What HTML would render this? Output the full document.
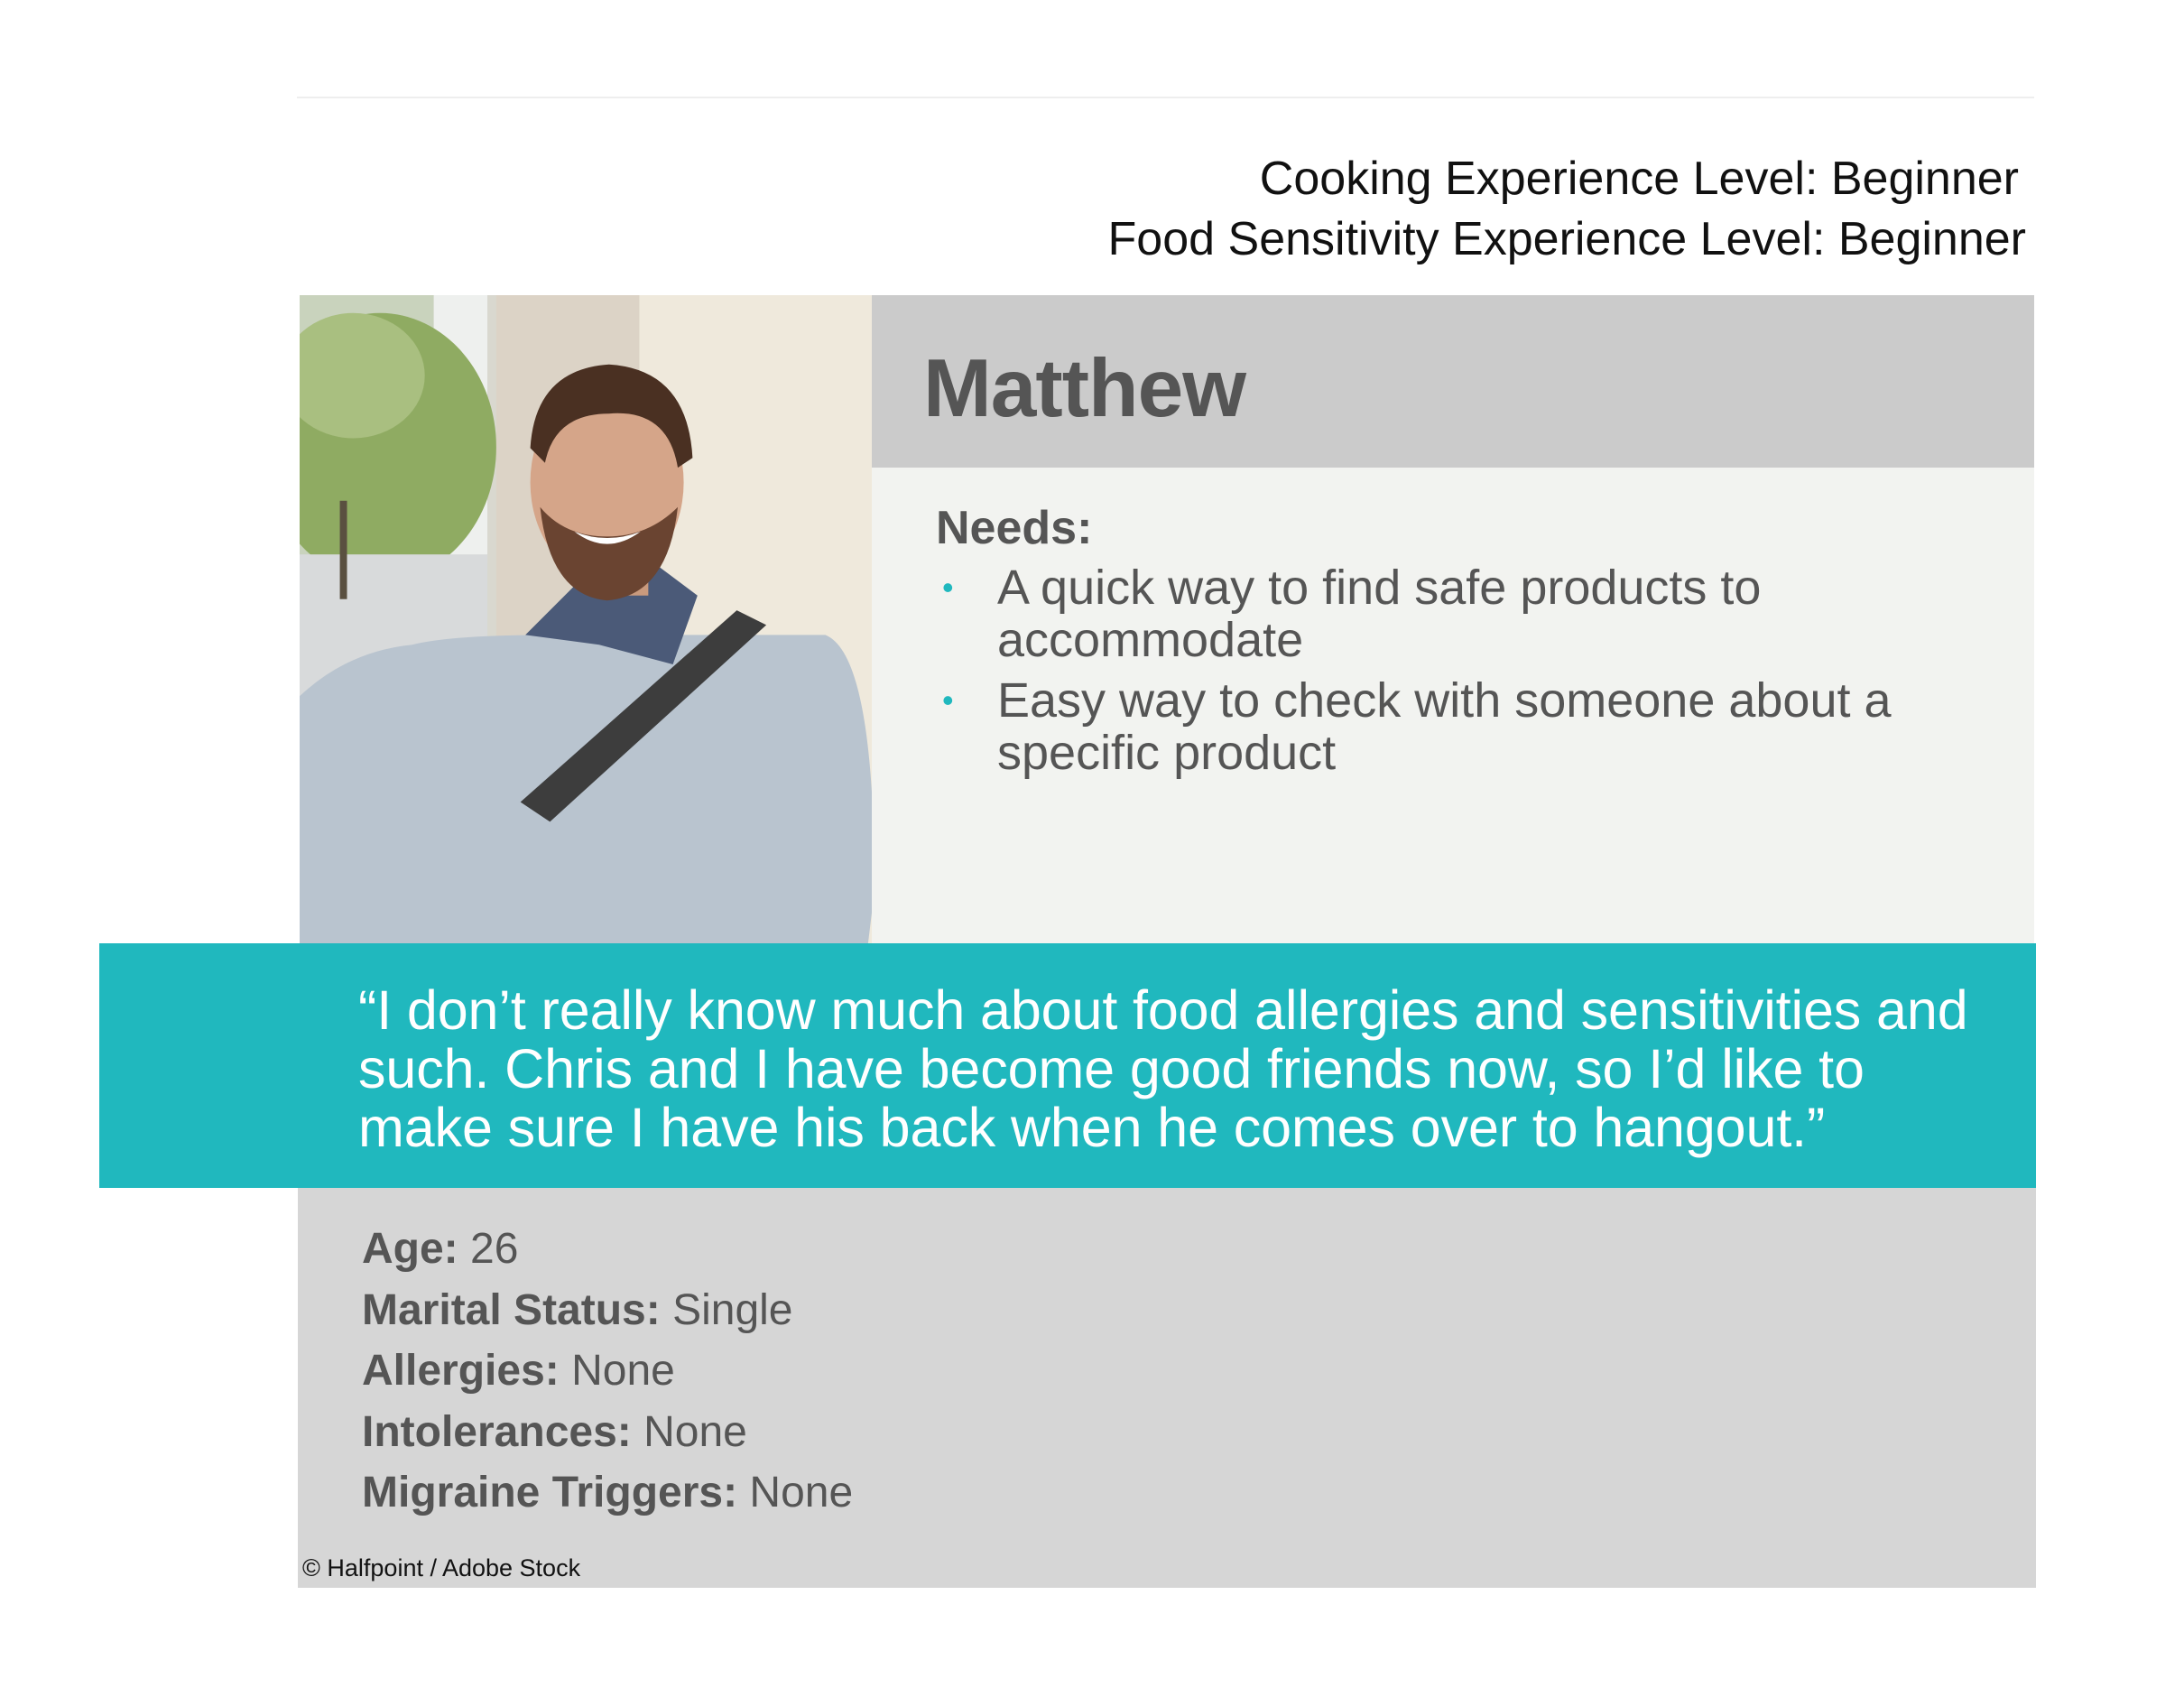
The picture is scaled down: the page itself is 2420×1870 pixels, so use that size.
<!DOCTYPE html>
<html><head><meta charset="utf-8"><style>
body{margin:0;width:2420px;height:1870px;background:#fff;position:relative;overflow:hidden;font-family:"Liberation Sans",sans-serif;}
.a{position:absolute;white-space:nowrap;}
</style></head><body>
<div class="a" style="left:329px;top:107px;width:1925px;height:2px;background:#eeeeee"></div>
<div class="a" style="right:183px;top:165px;font-size:52px;color:#111;text-align:right;line-height:67px">Cooking Experience Level: Beginner<br><span style="margin-right:-8px">Food Sensitivity Experience Level: Beginner</span></div>

<svg class="a" style="left:332px;top:327px" width="634" height="718" viewBox="0 0 640 725" preserveAspectRatio="none">
<rect width="640" height="725" fill="#d9d8cf"/>
<rect x="0" y="0" width="210" height="725" fill="#c9d3bd"/>
<rect x="150" y="0" width="60" height="300" fill="#eef0ee"/>
<ellipse cx="90" cy="170" rx="130" ry="150" fill="#8fab62"/>
<ellipse cx="60" cy="90" rx="80" ry="70" fill="#a9bf80"/>
<rect x="0" y="290" width="210" height="200" fill="#d8dadb"/>
<rect x="45" y="230" width="8" height="110" fill="#5a5040"/>
<rect x="0" y="480" width="210" height="245" fill="#e2e0dc"/>
<rect x="220" y="0" width="170" height="725" fill="#dcd3c6"/>
<rect x="380" y="0" width="260" height="725" fill="#efe9dc"/>
<g transform="translate(60,50) scale(1.1)">
<path d="M-100 420 Q-40 320 60 310 Q100 300 200 300 L480 300 Q530 320 530 560 L510 725 L-100 725 Z" fill="#b9c4cf"/>
<path d="M175 300 L225 250 L310 230 L350 260 L325 330 L250 310 Z" fill="#4b5a78"/>
<path d="M390 275 L420 290 L200 490 L170 470 Z" fill="#3d3d3d"/>
<rect x="240" y="180" width="60" height="80" fill="#c99a7d"/>
<ellipse cx="258" cy="145" rx="78" ry="100" fill="#d5a589"/>
<path d="M190 170 Q200 260 258 265 Q320 260 330 170 Q300 200 258 200 Q215 200 190 170 Z" fill="#6a4431"/>
<path d="M180 110 Q185 30 260 25 Q340 30 345 120 L330 130 Q320 70 260 75 Q205 75 195 125 Z" fill="#4a3022"/>
<path d="M225 195 Q258 220 292 195 Q258 208 225 195 Z" fill="#fff"/>
</g>
</svg>

<div class="a" style="left:966px;top:327px;width:1288px;height:191px;background:#cbcbcb"></div>
<div class="a" style="left:1023px;top:379px;font-size:91px;font-weight:bold;color:#555;letter-spacing:-1px">Matthew</div>
<div class="a" style="left:966px;top:518px;width:1288px;height:527px;background:#f2f3f0"></div>
<div class="a" style="left:1037px;top:555px;font-size:52px;font-weight:bold;color:#555">Needs:</div>
<div class="a" style="left:1044px;top:622px;font-size:54px;color:#555;line-height:58px">
<span style="color:#20b8be;font-size:36px;position:absolute;left:0;top:0">•</span><div style="margin-left:61px">A quick way to find safe products to<br>accommodate</div>
<span style="color:#20b8be;font-size:36px;position:absolute;left:0;top:125px">•</span><div style="margin-left:61px;margin-top:9px">Easy way to check with someone about a<br>specific product</div>
</div>

<div class="a" style="left:110px;top:1045px;width:2146px;height:271px;background:#20b8be"></div>
<div class="a" style="left:397px;top:1087px;font-size:61px;color:#fff;line-height:65px;letter-spacing:-0.1px">“I don’t really know much about food allergies and sensitivities and<br>such. Chris and I have become good friends now, so I’d like to<br>make sure I have his back when he comes over to hangout.”</div>

<div class="a" style="left:330px;top:1316px;width:1926px;height:443px;background:#d6d6d6"></div>
<div class="a" style="left:401px;top:1350px;font-size:48px;color:#555;line-height:67.5px">
<b>Age:</b> 26<br><b>Marital Status:</b> Single<br><b>Allergies:</b> None<br><b>Intolerances:</b> None<br><b>Migraine Triggers:</b> None</div>
<div class="a" style="left:335px;top:1722px;font-size:27px;color:#111">© Halfpoint / Adobe Stock</div>
</body></html>
